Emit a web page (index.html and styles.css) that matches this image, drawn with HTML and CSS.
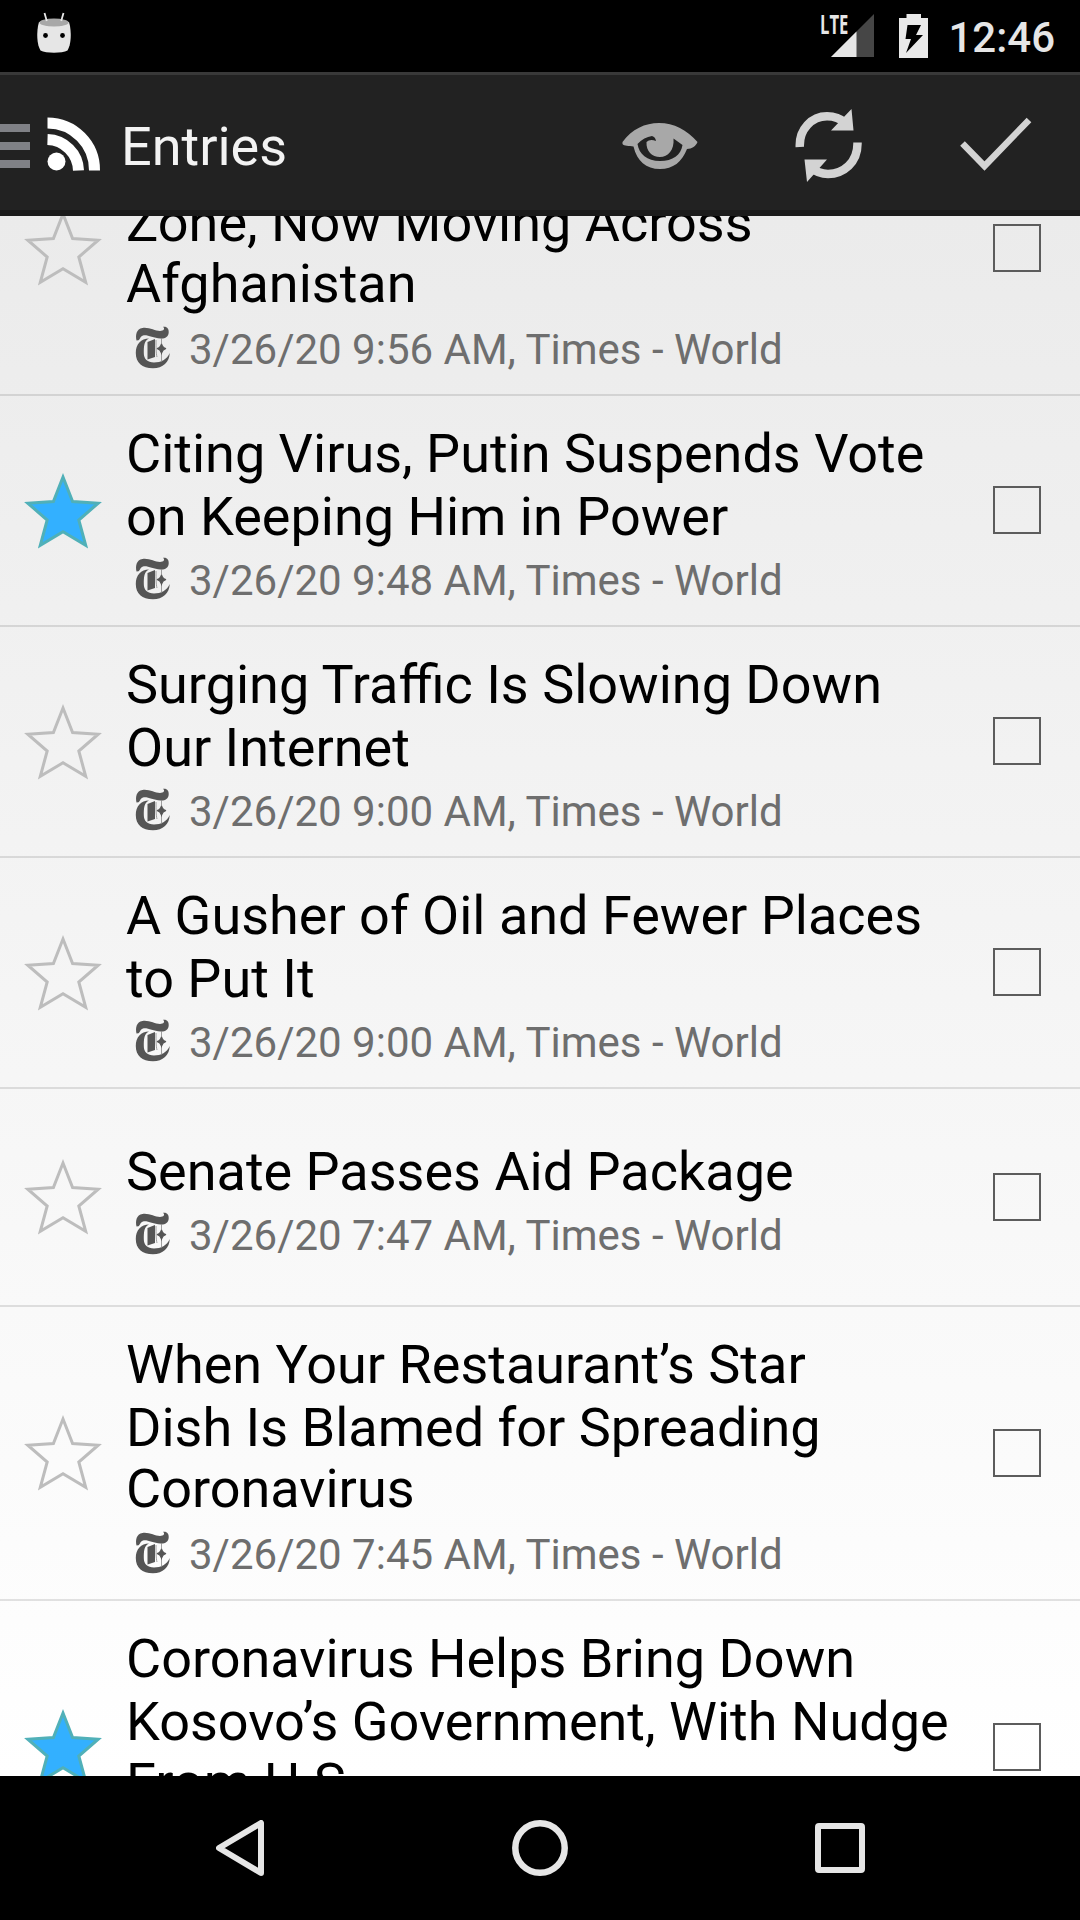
FILE: index.html
```html
<!DOCTYPE html>
<html lang="en">
<head>
<meta charset="utf-8">
<title>Entries</title>
<link rel="stylesheet" href="styles.css">
</head>
<body>
<svg width="0" height="0" class="defs" aria-hidden="true">
  <symbol id="star" viewBox="0 0 80 78">
    <path d="M40 5L49.600 29.500 75.200 31.200 55.800 48 62.700 73.300 40 59.800 17.300 73.300 24.200 48 4.800 31.200 30.400 29.500Z"/>
  </symbol>
  <symbol id="times" viewBox="0 0 36 44">
    <path d="M1.500 14.500C.3 9 1.300 3 7.500 2 14 1 20 5 25 5 28.500 5 30.300 3 28 .8 32 0 34 3 33.700 6.500 33.400 11 30 12.800 25.500 12.500 18 12 12.500 8.500 8 9.500 5 10.300 5.500 13 3.500 14.200Z"/>
    <path d="M14 12.500C9 15 8.800 20 8.800 27 8.800 33 12.500 36.500 19 36.500 26 36.500 32 33.500 34.700 27 34.500 36 28 42.300 18 42.300 7 42.300 .8 36.500 .8 27 .8 18 6 12.500 14 12.500Z"/>
    <path d="M12.500 16L20 13V31L12.500 33.500Z"/>
    <path d="M26.500 12V36M21 14C21 22 21 27 22 31" fill="none" stroke="#888" stroke-width=".8"/>
    <path d="M26.500 18Q27.500 22 31 22.500 27.500 23.500 26.500 27 25.500 23.500 22 22.500 25.500 22 26.500 18Z" stroke="#555" stroke-width="1.200"/>
  </symbol>
</svg>

<header class="status">
  <svg class="android" width="36" height="42" viewBox="0 0 36 42">
    <path d="M3 10C0 20 1 33 4.500 38.500 10 41.500 26 41.500 31.500 38.500 35 33 36 20 33 10Z" fill="#e6e6e6"/>
    <ellipse cx="18" cy="10.500" rx="14.700" ry="4" fill="#a8a8a8"/>
    <path d="M8.500 1L10.800 9M27.500 1L25.200 9" stroke="#e6e6e6" stroke-width="1.800" fill="none"/>
    <circle cx="9.500" cy="23.500" r="2.400"/><circle cx="26.500" cy="23.500" r="2.400"/>
  </svg>
  <div class="status-right">
    <div class="signal">
      <span class="lte">LTE</span>
      <svg width="43" height="43" viewBox="0 0 43 43"><path d="M43 0V43H0Z" fill="#464646"/><path d="M25.500 17.500V43H0Z" fill="#e6e6e6"/></svg>
    </div>
    <svg class="battery" width="29" height="44" viewBox="0 0 29 44"><path d="M7.500 0H22V4H29V44H0V4H7.500Z" fill="#e9e9e9"/><path d="M8.500 11H22L17 21H24L7 39 12 25H6.500Z" fill="#000"/></svg>
    <span class="clock">12:46</span>
  </div>
</header>

<nav class="bar">
  <svg class="menu" width="30" height="44" viewBox="0 0 30 44"><path d="M0 0H30V8H0ZM0 18H30V26H0ZM0 36H30V44H0Z" fill="#808186"/></svg>
  <svg class="rss" width="54" height="54" viewBox="0 0 54 54"><circle cx="9.500" cy="44.500" r="9" fill="#fff"/><path d="M.5 22.500A32 32 0 0 1 31.500 53.500M.5 6A47 47 0 0 1 47.500 53.500" stroke="#fff" stroke-width="11" fill="none"/></svg>
  <h1 class="heading">Entries</h1>
  <div class="actions">
    <svg width="76" height="46" viewBox="0 0 76 46"><path fill="#a8a8a8" d="M.5 19C10 6 23 0 37 0 52 0 65 7 75.500 19 74 23 70 26 65 26 60 39 51 46 38 46 24 46 15 38 11.500 23.500 7 23 2 23 .5 21Z"/><path fill="#222" d="M15.500 21Q22 14 30 13 33.500 14 34 18 28 15.500 24.500 19C24 28 30 34 38 34 46 34 52.500 27 51.500 15.500L60.500 22C59 32 51 38 38 38 25 38 17 31 15.500 21Z"/></svg>
    <svg width="68" height="74" viewBox="0 0 68 74"><path fill="none" stroke="#d3d3d3" stroke-width="8.500" d="M4.800 38C4 20 17 7.300 32 7.300 41 7.300 46 10 50.500 14M62.500 33.500C63 54 48 65 33 65 26 65 20.500 62.500 16 58.500"/><path fill="#d3d3d3" d="M56.500 0L58.500 21.500H36ZM9.500 50.500H32L12 73Z"/></svg>
    <svg class="done" width="72" height="54" viewBox="0 0 72 54"><path d="M2.500 26.500L24.500 49 69 3" fill="none" stroke="#d3d3d3" stroke-width="6.500"/></svg>
  </div>
</nav>

<main class="list">
  <article class="entry scrolled">
    <svg class="star"><use href="#star"/></svg>
    <div class="text"><h2>&nbsp;<br>Zone, Now Moving Across<span class="last">Afghanistan</span></h2><p><svg class="logo"><use href="#times"/></svg>3/26/20 9:56 AM, Times - World</p></div>
    <span class="check"></span>
  </article>
  <article class="entry">
    <svg class="star on"><use href="#star"/></svg>
    <div class="text"><h2>Citing Virus, Putin Suspends Vote<br>on Keeping Him in Power</h2><p><svg class="logo"><use href="#times"/></svg>3/26/20 9:48 AM, Times - World</p></div>
    <span class="check"></span>
  </article>
  <article class="entry">
    <svg class="star"><use href="#star"/></svg>
    <div class="text"><h2>Surging Traffic Is Slowing Down<br>Our Internet</h2><p><svg class="logo"><use href="#times"/></svg>3/26/20 9:00 AM, Times - World</p></div>
    <span class="check"></span>
  </article>
  <article class="entry">
    <svg class="star"><use href="#star"/></svg>
    <div class="text"><h2>A Gusher of Oil and Fewer Places<br>to Put It</h2><p><svg class="logo"><use href="#times"/></svg>3/26/20 9:00 AM, Times - World</p></div>
    <span class="check"></span>
  </article>
  <article class="entry">
    <svg class="star"><use href="#star"/></svg>
    <div class="text"><h2>Senate Passes Aid Package</h2><p><svg class="logo"><use href="#times"/></svg>3/26/20 7:47 AM, Times - World</p></div>
    <span class="check"></span>
  </article>
  <article class="entry">
    <svg class="star"><use href="#star"/></svg>
    <div class="text"><h2>When Your Restaurant’s Star<br>Dish Is Blamed for Spreading<span class="last">Coronavirus</span></h2><p><svg class="logo"><use href="#times"/></svg>3/26/20 7:45 AM, Times - World</p></div>
    <span class="check"></span>
  </article>
  <article class="entry">
    <svg class="star on"><use href="#star"/></svg>
    <div class="text"><h2>Coronavirus Helps Bring Down<br>Kosovo’s Government, With Nudge<span class="last">From U.S.</span></h2><p>&nbsp;</p></div>
    <span class="check"></span>
  </article>
</main>

<footer class="keys">
  <svg class="back" width="48" height="56" viewBox="0 0 48 56"><path d="M45 3V53L3 28Z" fill="none" stroke="#e6e6e6" stroke-width="6" stroke-linejoin="round"/></svg>
  <svg width="56" height="56" viewBox="0 0 56 56"><circle cx="28" cy="28" r="24.700" fill="none" stroke="#e6e6e6" stroke-width="6.500"/></svg>
  <svg width="50" height="50" viewBox="0 0 50 50"><rect x="3" y="3" width="44" height="44" rx="1" fill="none" stroke="#e6e6e6" stroke-width="6" stroke-linejoin="round"/></svg>
</footer>
</body>
</html>
```
FILE: styles.css
```css
* { box-sizing: border-box; margin: 0; padding: 0; }
body {
  width: 1080px;
  height: 1920px;
  overflow: hidden;
  display: flex;
  flex-direction: column;
  font-family: Roboto, sans-serif;
  background: #000;
}
svg { display: block; flex: none; }
.defs { display: none; }

.status {
  height: 72px;
  flex: none;
  display: flex;
  justify-content: space-between;
  align-items: flex-start;
  padding: 12px 25px 0 36px;
  color: #e6e6e6;
}
.status-right { display: flex; }
.signal { display: flex; padding-top: 2px; }
.lte {
  font: 700 26px/20px "Open Sans", Roboto, sans-serif;
  width: 11px;
  white-space: nowrap;
  transform: scaleX(.64);
  transform-origin: 0 0;
}
.battery { margin: 2px 20px 0 25px; }
.clock { padding-top: 1px; font-size: 42px; font-weight: 500; line-height: 50px; }

.bar {
  height: 144px;
  flex: none;
  display: flex;
  align-items: center;
  padding-top: 6px;
  background: #222;
  border-top: 3px solid #393939;
  border-bottom: 6px solid #1b1b1b;
}
.rss { margin: 0 20px 3px 17px; }
.heading { margin-top: 2px; font-size: 54px; font-weight: 400; line-height: 64px; color: #f3f3f3; }
.actions { margin-left: auto; display: flex; align-items: center; padding-right: 48px; gap: 97px; }
.done { margin-bottom: 3px; }

.list {
  flex: 1;
  min-height: 0;
  overflow: hidden;
  background: linear-gradient(#ebebeb, #fff);
}
.entry {
  display: flex;
  align-items: center;
  min-height: 218px;
  padding: 0 39px 0 23px;
  border-bottom: 2px solid rgba(0, 0, 0, .11);
}
.scrolled { margin-top: -114px; }
.star { width: 80px; height: 78px; fill: none; stroke: #bdbdbd; stroke-width: 3; }
.star.on { fill: #33b0ff; stroke: #50b0b8; }
.text { flex: 1; margin-left: 23px; padding: 26px 0 20px; white-space: nowrap; }
.text h2 { font-size: 54px; font-weight: 400; line-height: 63px; color: #000; }
.last { display: block; margin-top: -2px; padding-bottom: 2px; }
.text p {
  display: flex;
  align-items: center;
  height: 49px;
  margin-top: 8px;
  padding-left: 9px;
  font-size: 42px;
  line-height: 49px;
  color: #6e6e6e;
}
.logo { width: 36px; height: 44px; margin: 0 18px 3px 0; fill: #555; }
.check { width: 48px; height: 48px; flex: none; margin-bottom: 1px; border: 2px solid #5c5c5c; }

.keys {
  height: 144px;
  flex: none;
  display: flex;
  align-items: center;
  justify-content: center;
  gap: 247px;
  padding-left: 1px;
}
.back { margin-right: 1px; }
```
